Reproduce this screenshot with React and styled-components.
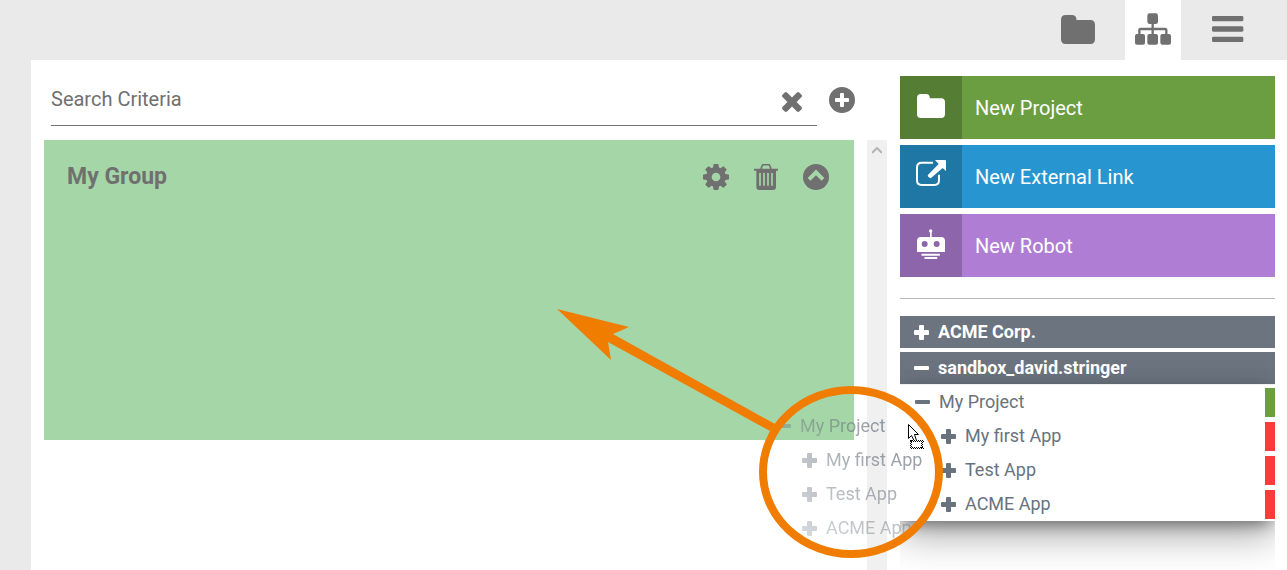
import React from "react";
import styled, { createGlobalStyle } from "styled-components";

const GlobalStyle = createGlobalStyle`
  *, *::before, *::after { box-sizing: border-box; }
  body { margin: 0; background: #eaeaea; font-family: Roboto, "Liberation Sans", sans-serif; color: #707070; }
  button { font: inherit; color: inherit; border: 0; padding: 0; background: none; cursor: pointer; }
  ul { list-style: none; margin: 0; padding: 0; }
  svg { display: block; }
`;

const Page = styled.div`
  display: flex;
  flex-direction: column;
  min-height: 100vh;
  overflow: hidden;
`;
const TopBar = styled.header`
  display: flex;
  justify-content: flex-end;
  gap: 19px;
  height: 60px;
  padding-right: 31px;
`;
const TopTab = styled.button`
  display: flex;
  align-items: center;
  justify-content: center;
  width: 56px;
  height: 60px;
  padding-bottom: 2px;
  background: ${(p) => (p.$active ? "#fff" : "transparent")};
`;
const Workspace = styled.main`
  position: relative;
  flex: 1;
  display: flex;
  gap: 13px;
  margin-left: 31px;
  padding-right: 12px;
  background: #fff;
`;
const Content = styled.section`
  flex: 1;
  min-width: 0;
  display: flex;
  flex-direction: column;
  padding-left: 13px;
`;
const SearchRow = styled.div`
  display: flex;
  align-items: center;
  gap: 12px;
  height: 80px;
  padding: 0 32px 0 7px;
`;
const SearchField = styled.div`
  flex: 1;
  display: flex;
  align-items: center;
  height: 52px;
  padding-right: 15px;
  border-bottom: 1px solid #707070;
`;
const SearchInput = styled.input`
  flex: 1;
  min-width: 0;
  padding: 0 0 2px;
  border: 0;
  outline: 0;
  background: none;
  font: 400 20px/24px Roboto, "Liberation Sans", sans-serif;
  color: #707070;
  &::placeholder { color: #707070; opacity: 1; }
`;
const IconButton = styled.button`
  display: flex;
`;
const ClearButton = styled(IconButton)`
  padding-top: 4px;
`;
const ScrollArea = styled.div`
  flex: 1;
  display: flex;
  gap: 13px;
`;
const GroupCard = styled.article`
  flex: 1;
  height: 300px;
  background: #a5d6a7;
`;
const GroupHeader = styled.div`
  display: flex;
  align-items: center;
  gap: 24px;
  height: 74px;
  padding: 0 25px 0 23px;
`;
const GroupTitle = styled.h2`
  flex: 1;
  margin: 0;
  font-size: 23px;
  line-height: 28px;
  font-weight: 700;
`;
const ScrollTrack = styled.div`
  display: flex;
  justify-content: center;
  width: 20px;
  padding-top: 7px;
  background: #f0f0f0;
`;
const Sidebar = styled.aside`
  width: 375px;
  padding-top: 16px;
`;
const ActionList = styled.div`
  display: flex;
  flex-direction: column;
  gap: 6px;
`;
const ActionButton = styled.button`
  display: flex;
  align-items: center;
  gap: 13px;
  height: 63px;
  color: #fff;
  font-size: 20px;
  line-height: 24px;
  text-align: left;
  background: ${(p) => p.$color};
`;
const ActionIcon = styled.span`
  display: flex;
  align-items: center;
  justify-content: center;
  width: 62px;
  height: 100%;
  padding-bottom: 3px;
  background: ${(p) => p.$color};
`;
const Divider = styled.hr`
  height: 1px;
  margin: 21px 0 17px;
  border: 0;
  background: #b8b8b8;
`;
const TreeArea = styled.nav`
  overflow-x: clip;
  overflow-y: visible;
  padding-bottom: 50px;
`;
const OrgBar = styled.button`
  display: flex;
  align-items: center;
  gap: 9px;
  width: 100%;
  height: 32px;
  margin-bottom: ${(p) => (p.$open ? 0 : 4)}px;
  padding-left: 14px;
  color: #fff;
  font-size: 18px;
  line-height: 24px;
  font-weight: 700;
  background: #6b747f;
`;
const TreePanel = styled.ul`
  background: #fff;
  border-top: 1px solid #efeff2;
  box-shadow: 0 6px 16px -4px rgba(0, 0, 0, 0.5), 0 16px 36px 0 rgba(0, 0, 0, 0.3);
`;
const TreeRow = styled.li`
  display: flex;
  align-items: center;
  height: 34px;
  padding-left: ${(p) => (p.$child ? 41 : 15)}px;
`;
const TreeButton = styled.button`
  flex: 1;
  display: flex;
  align-items: center;
  gap: 9px;
  color: #69737e;
  font-size: 18px;
  line-height: 24px;
  text-align: left;
`;
const StatusTag = styled.span`
  width: 10px;
  height: 29px;
  background: ${(p) => p.$color};
`;
const DragGhost = styled.ul`
  position: absolute;
  top: 349px;
  right: 151px;
  width: 375px;
  pointer-events: none;
  mask-image: radial-gradient(circle at 147px 16px, rgba(0, 0, 0, 0.8), rgba(0, 0, 0, 0.35) 130px, transparent 230px);
`;
const GhostLabel = styled.span`
  display: flex;
  align-items: center;
  gap: 9px;
  color: #69737e;
  font-size: 18px;
  line-height: 24px;
`;
const Annotation = styled.svg`
  position: absolute;
  top: 240px;
  right: 340px;
  pointer-events: none;
`;

const Folder = ({ w, h }) => (
  <svg width={w} height={h} viewBox="0 0 103 86" preserveAspectRatio="none" fill="currentColor" aria-hidden="true">
    <path d="M14 0h19q14 0 14 15h42q14 0 14 14v43q0 14-14 14H14Q0 86 0 72V14Q0 0 14 0z" />
  </svg>
);
const Sitemap = () => (
  <svg width="36" height="32" viewBox="0 0 108 96" fill="currentColor" aria-hidden="true">
    <rect x="37" y="1" width="32" height="32" rx="7" />
    <rect x="0" y="63" width="30" height="32" rx="6" />
    <rect x="37" y="63" width="32" height="32" rx="6" />
    <rect x="76" y="63" width="32" height="32" rx="6" />
    <path d="M53 30v36M13 66V52q0-4 4-4h73q4 0 4 4v14" fill="none" stroke="currentColor" strokeWidth="7" />
  </svg>
);
const Bars = () => (
  <svg width="32" height="26" viewBox="0 0 96 78" fill="currentColor" aria-hidden="true">
    <rect x="0" width="94" height="16" rx="4" />
    <rect x="0" y="31" width="94" height="16" rx="4" />
    <rect x="0" y="62" width="94" height="16" rx="4" />
  </svg>
);
const ExternalLink = () => (
  <svg width="30" height="30" viewBox="0 0 90 90" fill="currentColor" aria-hidden="true">
    <path d="M51 8H17Q3 8 3 22v39q0 14 14 14h38q14 0 14-14V44" fill="none" stroke="currentColor" strokeWidth="6" />
    <path d="M57 0h30q3 0 3 3v30l-10-9-36 31q-8-1-9-9l33-34z" />
  </svg>
);
const Robot = () => (
  <svg width="28" height="30" viewBox="0 0 84 90" fill="currentColor" aria-hidden="true">
    <circle cx="41" cy="6" r="5" />
    <path d="M39 8h5v18h-5z" />
    <path fillRule="evenodd" d="M12 24h60q12 0 12 12v33H0V36q0-12 12-12zm11 12a9 9 0 1 0 0 18 9 9 0 0 0 0-18zm36 0a9 9 0 1 0 0 18 9 9 0 0 0 0-18z" />
    <rect x="13" y="74" width="56" height="6" rx="2" />
    <rect x="22" y="84" width="39" height="6" rx="2" />
  </svg>
);
const Times = () => (
  <svg width="20" height="20" viewBox="302 238 1188 1188" fill="currentColor" aria-hidden="true">
    <path d="M1490 1258q0 40-28 68l-136 136q-28 28-68 28t-68-28l-294-294-294 294q-28 28-68 28t-68-28l-136-136q-28-28-28-68t28-68l294-294-294-294q-28-28-28-68t28-68l136-136q28-28 68-28t68 28l294 294 294-294q28-28 68-28t68 28l136 136q28 28 28 68t-28 68l-294 294 294 294q28 28 28 68z" transform="translate(0 -64)" />
  </svg>
);
const PlusCircle = () => (
  <svg width="26" height="26" viewBox="0 0 26 26" aria-hidden="true">
    <circle cx="13" cy="13" r="13" fill="currentColor" />
    <rect x="6" y="11" width="14" height="4" rx="1" fill="#fff" />
    <rect x="11" y="6" width="4" height="14" rx="1" fill="#fff" />
  </svg>
);
const Cog = () => (
  <svg width="26" height="26" viewBox="128 128 1536 1536" fill="currentColor" aria-hidden="true">
    <path d="M1152 896q0-106-75-181t-181-75-181 75-75 181 75 181 181 75 181-75 75-181zm512-109v222q0 12-8 23t-20 13l-185 28q-19 54-39 91 35 50 107 138 10 12 10 25t-9 23q-27 37-99 108t-94 71q-12 0-26-9l-138-108q-44 23-91 38-16 136-29 186-7 28-36 28h-222q-14 0-24.500-8.500t-11.500-21.500l-28-184q-49-16-90-37l-141 107q-10 9-25 9-14 0-25-11-126-114-165-168-7-10-7-23 0-12 8-23 15-21 51-66.500t54-70.500q-27-50-41-99l-183-27q-13-2-21-12.500t-8-23.500v-222q0-12 8-23t19-13l186-28q14-46 39-92-40-57-107-138-10-12-10-24 0-10 9-23 26-36 98.500-107.500t94.500-71.500q13 0 26 10l138 107q44-23 91-38 16-136 29-186 7-28 36-28h222q14 0 24.500 8.500t11.500 21.500l28 184q49 16 90 37l142-107q9-9 24-9 13 0 25 10 129 119 165 170 7 8 7 22 0 12-8 23-15 21-51 66.500t-54 70.500q26 50 41 98l183 28q13 2 21 12.500t8 23.500z" />
  </svg>
);
const Trash = () => (
  <svg width="26" height="26" viewBox="0 0 78 78" aria-hidden="true">
    <path d="M3 14h72v6h-6v49q0 9-9 9H19q-9 0-9-9V20H3z" fill="currentColor" />
    <path d="M24 15l3-9q1-4 5-4h14q4 0 5 4l3 9" fill="none" stroke="currentColor" strokeWidth="5" />
    <path d="M21 27v38M33 27v38M45 27v38M57 27v38" stroke="#a5d6a7" strokeWidth="5" />
  </svg>
);
const ChevronCircle = () => (
  <svg width="26" height="26" viewBox="0 0 78 78" aria-hidden="true">
    <circle cx="39" cy="39" r="39" fill="currentColor" />
    <path d="M18 46l21-21 21 21" fill="none" stroke="#a5d6a7" strokeWidth="12" />
  </svg>
);
const ScrollUp = () => (
  <svg width="10" height="8" viewBox="0 0 10 8" aria-hidden="true">
    <path d="M0 6l5-5 5 5" fill="none" stroke="#b4b4b4" strokeWidth="2" />
  </svg>
);
const Toggle = ({ open }) => (
  <svg width="15" height="15" viewBox="0 0 15 15" fill="currentColor" aria-hidden="true">
    <rect y="5" width="15" height={open ? 4 : 5} rx="1" />
    {!open && <rect x="5" y="0" width="5" height="15" rx="1" />}
  </svg>
);

const ACTIONS = [
  { label: "New Project", color: "#6a9e41", dark: "#557e34", icon: <Folder w={28} h={24} /> },
  { label: "New External Link", color: "#2795cf", dark: "#1f77a6", icon: <ExternalLink /> },
  { label: "New Robot", color: "#af7ed4", dark: "#8c65aa", icon: <Robot /> },
];
const NODES = [
  { label: "My Project", open: true, color: "#6a9e41" },
  { label: "My first App", color: "#fe3a3a" },
  { label: "Test App", color: "#fe3a3a" },
  { label: "ACME App", color: "#fe3a3a" },
];

export default function App() {
  return (
    <Page>
      <GlobalStyle />
      <TopBar>
        <TopTab aria-label="Projects"><Folder w={34} h={29} /></TopTab>
        <TopTab $active aria-label="Groups"><Sitemap /></TopTab>
        <TopTab aria-label="Menu"><Bars /></TopTab>
      </TopBar>
      <Workspace>
        <Content>
          <SearchRow>
            <SearchField>
              <SearchInput type="text" placeholder="Search Criteria" aria-label="Search Criteria" />
              <ClearButton aria-label="Clear"><Times /></ClearButton>
            </SearchField>
            <IconButton aria-label="Add group"><PlusCircle /></IconButton>
          </SearchRow>
          <ScrollArea>
            <GroupCard>
              <GroupHeader>
                <GroupTitle>My Group</GroupTitle>
                <IconButton aria-label="Settings"><Cog /></IconButton>
                <IconButton aria-label="Delete"><Trash /></IconButton>
                <IconButton aria-label="Collapse"><ChevronCircle /></IconButton>
              </GroupHeader>
            </GroupCard>
            <ScrollTrack><ScrollUp /></ScrollTrack>
          </ScrollArea>
        </Content>
        <Sidebar>
          <ActionList>
            {ACTIONS.map((a) => (
              <ActionButton key={a.label} $color={a.color}>
                <ActionIcon $color={a.dark}>{a.icon}</ActionIcon>
                {a.label}
              </ActionButton>
            ))}
          </ActionList>
          <Divider />
          <TreeArea>
            <OrgBar><Toggle />ACME Corp.</OrgBar>
            <OrgBar $open><Toggle open />sandbox_david.stringer</OrgBar>
            <TreePanel>
              {NODES.map((n) => (
                <TreeRow key={n.label} $child={!n.open}>
                  <TreeButton><Toggle open={n.open} />{n.label}</TreeButton>
                  <StatusTag $color={n.color} />
                </TreeRow>
              ))}
            </TreePanel>
          </TreeArea>
        </Sidebar>
        <DragGhost aria-hidden="true">
          {NODES.map((n) => (
            <TreeRow key={n.label} $child={!n.open}>
              <GhostLabel><Toggle open={n.open} />{n.label}</GhostLabel>
            </TreeRow>
          ))}
        </DragGhost>
        <Annotation width="397" height="270" viewBox="550 300 397 270" aria-hidden="true">
          <path d="M557 309l72 18-16 7 162 90-5 7-162-89 3 18z" fill="#f07d00" />
          <ellipse cx="851" cy="472" rx="88" ry="82" fill="none" stroke="#f07d00" strokeWidth="8" />
          <path d="M908.500 424.500v14l3-3 3 6 2-1-2-6h4z" fill="#fff" stroke="#000" />
          <rect x="910" y="440" width="13" height="9" fill="#fff" />
          <path
            d="M910 440.500h13M911 441.500h13M910 447.500h13M911 448.500h13M910.500 441v8M911.500 440v8M921.500 441v8M922.500 440v8"
            stroke="#000"
            strokeDasharray="1 1"
            shapeRendering="crispEdges"
          />
        </Annotation>
      </Workspace>
    </Page>
  );
}
